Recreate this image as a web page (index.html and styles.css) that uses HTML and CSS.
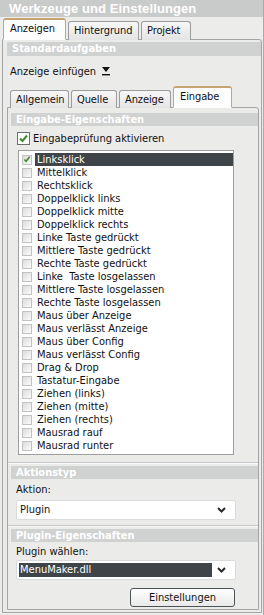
FILE: index.html
```html
<!DOCTYPE html>
<html lang="de">
<head>
<meta charset="utf-8">
<title>Werkzeuge und Einstellungen</title>
<link rel="stylesheet" href="styles.css">
</head>
<body>
<div class="window">
  <div class="title">Werkzeuge und Einstellungen</div>
  <div class="tabs outer-tabs">
    <div class="tab active">Anzeigen</div>
    <div class="tab">Hintergrund</div>
    <div class="tab">Projekt</div>
  </div>
  <div class="panel outer-panel">
    <div class="head">Standardaufgaben</div>
    <div class="insert-row">Anzeige einfügen
      <svg class="drop" width="8" height="9" viewBox="0 0 8 9"><path d="M0 0H8L4 5Z" fill="#111"/><rect x="0" y="7" width="8" height="1.4" fill="#111"/></svg>
    </div>
    <div class="tabs inner-tabs">
      <div class="tab">Allgemein</div>
      <div class="tab">Quelle</div>
      <div class="tab">Anzeige</div>
      <div class="tab active">Eingabe</div>
    </div>
    <div class="panel inner-panel">
      <div class="head">Eingabe-Eigenschaften</div>
      <div class="check-row">
        <span class="cb big"><svg width="11" height="11" viewBox="0 0 11 11"><path d="M2 5.5L4.5 8L9 2.5" fill="none" stroke="#3c8c2c" stroke-width="2"/></svg></span>
        <span>Eingabeprüfung aktivieren</span>
      </div>
      <div class="listbox">
        <div class="item selected"><span class="cb"><svg width="9" height="9" viewBox="0 0 9 9"><path d="M1.5 4.5L3.5 6.5L7.5 1.5" fill="none" stroke="#3c8c2c" stroke-width="1.8"/></svg></span><span class="lbl">Linksklick</span></div>
        <div class="item"><span class="cb"></span><span class="lbl">Mittelklick</span></div>
        <div class="item"><span class="cb"></span><span class="lbl">Rechtsklick</span></div>
        <div class="item"><span class="cb"></span><span class="lbl">Doppelklick links</span></div>
        <div class="item"><span class="cb"></span><span class="lbl">Doppelklick mitte</span></div>
        <div class="item"><span class="cb"></span><span class="lbl">Doppelklick rechts</span></div>
        <div class="item"><span class="cb"></span><span class="lbl">Linke Taste gedrückt</span></div>
        <div class="item"><span class="cb"></span><span class="lbl">Mittlere Taste gedrückt</span></div>
        <div class="item"><span class="cb"></span><span class="lbl">Rechte Taste gedrückt</span></div>
        <div class="item"><span class="cb"></span><span class="lbl">Linke&nbsp; Taste losgelassen</span></div>
        <div class="item"><span class="cb"></span><span class="lbl">Mittlere Taste losgelassen</span></div>
        <div class="item"><span class="cb"></span><span class="lbl">Rechte Taste losgelassen</span></div>
        <div class="item"><span class="cb"></span><span class="lbl">Maus über Anzeige</span></div>
        <div class="item"><span class="cb"></span><span class="lbl">Maus verlässt Anzeige</span></div>
        <div class="item"><span class="cb"></span><span class="lbl">Maus über Config</span></div>
        <div class="item"><span class="cb"></span><span class="lbl">Maus verlässt Config</span></div>
        <div class="item"><span class="cb"></span><span class="lbl">Drag &amp; Drop</span></div>
        <div class="item"><span class="cb"></span><span class="lbl">Tastatur-Eingabe</span></div>
        <div class="item"><span class="cb"></span><span class="lbl">Ziehen (links)</span></div>
        <div class="item"><span class="cb"></span><span class="lbl">Ziehen (mitte)</span></div>
        <div class="item"><span class="cb"></span><span class="lbl">Ziehen (rechts)</span></div>
        <div class="item"><span class="cb"></span><span class="lbl">Mausrad rauf</span></div>
        <div class="item"><span class="cb"></span><span class="lbl">Mausrad runter</span></div>
      </div>
      <div class="sep"></div>
      <div class="head">Aktionstyp</div>
      <div class="field-label">Aktion:</div>
      <div class="select">
        <span class="val">Plugin</span>
        <svg class="chev" width="9" height="6" viewBox="0 0 9 6"><path d="M1 1L4.5 4.5L8 1" fill="none" stroke="#2a2a2a" stroke-width="2"/></svg>
      </div>
      <div class="sep sep-tight"></div>
      <div class="head">Plugin-Eigenschaften</div>
      <div class="field-label short">Plugin wählen:</div>
      <div class="select">
        <span class="val hl">MenuMaker.dll</span>
        <svg class="chev" width="9" height="6" viewBox="0 0 9 6"><path d="M1 1L4.5 4.5L8 1" fill="none" stroke="#2a2a2a" stroke-width="2"/></svg>
      </div>
      <div class="btn-row"><button class="btn">Einstellungen</button></div>
    </div>
  </div>
</div>
</body>
</html>
```
FILE: styles.css
```css
* { box-sizing: border-box; }
html, body { margin: 0; padding: 0; }
body {
  background: #ececeb;
  font-family: "DejaVu Sans Condensed", "Liberation Sans", sans-serif;
  font-size: 11px;
  color: #111;
  width: 264px;
  height: 615px;
  overflow: hidden;
}
.window {
  width: 264px;
  height: 615px;
  border-right: 1px solid #a9a9a9;
}
.title {
  height: 17px;
  background: #c9caca;
  color: #fff;
  font-family: "Liberation Sans", "DejaVu Sans", sans-serif;
  font-weight: bold;
  font-size: 13px;
  line-height: 18px;
  padding-left: 9px;
  letter-spacing: 0.1px;
  white-space: nowrap;
}
.tabs {
  display: flex;
  align-items: flex-end;
  gap: 2px;
  position: relative;
  z-index: 2;
}
.outer-tabs { height: 23px; padding-left: 3px; margin-bottom: -1px; }
.inner-tabs { height: 22px; padding-left: 3px; margin-bottom: -1px; }
.tab {
  height: 19px;
  border: 1px solid #999b9c;
  border-bottom: 0;
  border-radius: 3px 3px 0 0;
  background: linear-gradient(#f7f7f7, #e4e4e4);
  font-size: 11px;
  letter-spacing: -0.1px;
  line-height: 18px;
  padding: 0 5px;
  white-space: nowrap;
}
.inner-tabs .tab { height: 18px; line-height: 17px; }
.tab.active {
  height: 22px;
  background: #fdfdfd;
  border-top: 2px solid #c6a471;
  border-left-color: #a7a9aa;
  border-right-color: #a7a9aa;
  border-bottom: 1px solid #fdfdfd;
  line-height: 17px;
  padding-left: 6px;
}
.outer-tabs .tab:nth-child(1) { width: 63px; }
.outer-tabs .tab:nth-child(2) { width: 71px; }
.outer-tabs .tab:nth-child(3) { width: 50px; }
.inner-tabs .tab:nth-child(1) { width: 59px; }
.inner-tabs .tab:nth-child(2) { width: 46px; }
.inner-tabs .tab:nth-child(3) { width: 52px; }
.inner-tabs .tab:nth-child(4) { width: 59px; height: 22px; }

.panel {
  background: #ebebea;
  border: 1px solid #a2a4a5;
  border-radius: 0 3px 0 0;
  position: relative;
  z-index: 1;
}
.outer-panel {
  margin-left: 2px;
  width: 260px;
  height: 574px;
  padding: 2px 0 0 4px;
}
.inner-panel {
  width: 252px;
  height: 503px;
  padding: 5px 0 0 3px;
}
.head {
  background: #d0d2d2;
  color: #fff;
  font-weight: bold;
  font-size: 11px;
  height: 14px;
  line-height: 14px;
  padding-left: 5px;
  white-space: nowrap;
}
.inner-panel .head { height: 13px; line-height: 13px; }
.insert-row {
  height: 30px;
  display: flex;
  align-items: center;
  padding-left: 3px;
  gap: 6px;
}
.drop { margin-top: 1px; }
.check-row {
  margin-top: 6px;
  height: 13px;
  display: flex;
  align-items: center;
  gap: 3px;
  padding-left: 6px;
}
.cb {
  width: 10px;
  height: 10px;
  border: 1px solid #c2c2c2;
  background: linear-gradient(135deg, #dcdcdc, #fbfbfb);
  display: inline-flex;
  align-items: center;
  justify-content: center;
  flex: none;
}
.cb.big {
  width: 13px;
  height: 13px;
  border-color: #6c6f70;
  background: #fff;
}
.listbox {
  margin: 5px 0 0 7px;
  width: 216px;
  height: 305px;
  border: 1px solid #9c9ea0;
  background: #fff;
  padding: 2px 0 0 3px;
}
.item {
  height: 13px;
  display: flex;
  align-items: center;
  white-space: nowrap;
}
.item .cb { margin-right: 3px; }
.item .lbl {
  flex: 1;
  height: 13px;
  line-height: 13px;
  padding-left: 2px;
}
.item.selected .lbl { background: #3e4447; color: #fff; }
.sep {
  margin: 7px 0 2px -3px;
  height: 2px;
  border-top: 1px solid #c4c6c7;
  border-bottom: 1px solid #fbfbfb;
}
.sep.sep-tight { margin-top: 5px; }
.field-label {
  height: 21px;
  line-height: 21px;
  padding-left: 5px;
}
.field-label.short { height: 18px; line-height: 20px; }
.select {
  margin-left: 5px;
  width: 220px;
  height: 20px;
  background: #fff;
  border: 1px solid #d9dadb;
  border-radius: 2px;
  display: flex;
  align-items: center;
  padding: 0 9px 0 2px;
  justify-content: space-between;
}
.val { line-height: 14px; padding-left: 1px; }
.val.hl {
  background: #3e4447;
  color: #fff;
  width: 193px;
}
.btn-row {
  display: flex;
  justify-content: flex-end;
  padding-right: 23px;
  margin-top: 8px;
}
.btn {
  width: 105px;
  height: 19px;
  border: 1px solid #4c5357;
  border-radius: 3px;
  background: linear-gradient(#ffffff, #e9e9e9);
  font-family: inherit;
  font-size: 11px;
  color: #111;
  padding: 0;
}
```
